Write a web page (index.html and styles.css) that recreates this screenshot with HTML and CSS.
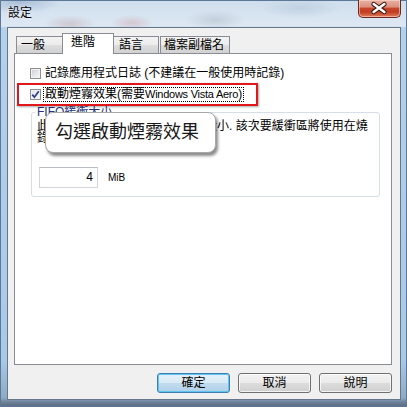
FILE: index.html
```html
<!DOCTYPE html>
<html lang="zh-Hant">
<head>
<meta charset="utf-8">
<title>設定</title>
<link rel="stylesheet" href="styles.css">
</head>
<body>
<div class="window">
  <div class="titlebar">
    <span class="title">設定</span>
    <div class="close">
      <svg width="43" height="18" viewBox="0 0 43 18">
        <path d="M16 5 L27 13 M27 5 L16 13" stroke="#3a1510" stroke-width="4.6" stroke-linecap="round"/>
        <path d="M16 5 L27 13 M27 5 L16 13" stroke="#ffffff" stroke-width="2.6" stroke-linecap="round"/>
      </svg>
    </div>
  </div>
  <div class="client">
    <div class="tabs">
      <div class="tab tab-general">一般</div>
      <div class="tab tab-advanced active">進階</div>
      <div class="tab tab-lang">語言</div>
      <div class="tab tab-ext">檔案副檔名</div>
    </div>
    <div class="panel">
      <div class="check-row">
        <span class="cb"></span>
        <span class="label">記錄應用程式日誌 (不建議在一般使用時記錄)</span>
      </div>
      <div class="check-row">
        <span class="cb checked">
          <svg width="9" height="9" viewBox="0 0 9 9"><path d="M1.3 4.6 L3.4 7.2 L7.8 1.2" fill="none" stroke="#2c3f86" stroke-width="1.7"/></svg>
        </span>
        <span class="label focus">啟動煙霧效果(需要<span class="latin">Windows Vista Aero</span>)</span>
      </div>
      <fieldset class="group">
        <legend>FIFO緩衝大小</legend>
        <p class="desc">此選項可讓您設定次要緩衝區的大小. 該次要緩衝區將使用在燒<br>錄時暫存資料.</p>
        <div class="size-row">
          <div class="input">4</div>
          <span class="unit">MiB</span>
        </div>
      </fieldset>
      <div class="highlight"></div>
      <div class="callout">勾選啟動煙霧效果</div>
    </div>
    <div class="buttons">
      <div class="btn default">確定</div>
      <div class="btn">取消</div>
      <div class="btn">說明</div>
    </div>
  </div>
</div>
</body>
</html>
```
FILE: styles.css
```css
* { box-sizing: border-box; }

html, body {
  margin: 0;
  padding: 0;
  width: 407px;
  height: 407px;
  overflow: hidden;
}

body {
  font-family: "Liberation Sans", "Noto Sans CJK TC", sans-serif;
  font-size: 12px;
  color: #000;
}

.window {
  width: 407px;
  height: 407px;
  display: flex;
  flex-direction: column;
  background:
    radial-gradient(ellipse 26px 9px at 70px 24px, rgba(190, 160, 165, 0.45), transparent),
    radial-gradient(ellipse 22px 8px at 132px 23px, rgba(200, 150, 160, 0.40), transparent),
    radial-gradient(ellipse 30px 10px at 215px 20px, rgba(170, 180, 195, 0.45), transparent),
    radial-gradient(ellipse 40px 10px at 300px 8px, rgba(170, 190, 210, 0.45), transparent),
    radial-gradient(ellipse 40px 12px at 20px 2px, rgba(120, 150, 185, 0.45), transparent),
    linear-gradient(to bottom, #cfdeed 0, #dde8f3 26px, #b4d1ec 28px, #a8c9e8 360px, #8ea9c4 398px, #6e8299 402px, #56687d 407px);
  box-shadow: inset 0 0 0 1px #5d7897;
}

.titlebar {
  height: 27px;
  flex: none;
  display: flex;
  justify-content: space-between;
  align-items: flex-start;
  padding: 0 6px 0 8px;
}

.title {
  margin-top: 7px;
  line-height: 13px;
  font-size: 12px;
  color: #000;
  text-shadow: 0 0 4px rgba(255, 255, 255, 0.9);
}

.close {
  width: 43px;
  height: 18px;
  border: 1px solid #6b2a1f;
  border-top: none;
  border-radius: 0 0 5px 5px;
  background: linear-gradient(to bottom, #e9b2a6 0, #dc8f7d 40%, #c5452c 50%, #c23d22 70%, #e07c5f 100%);
  box-shadow: inset 0 0 0 1px rgba(255, 220, 210, 0.55);
  display: flex;
}

.close svg { display: block; margin: -1px 0 0 -1px; }

.client {
  flex: 1;
  margin: 0 6px 7px 7px;
  border: 1px solid #66778c;
  background: #f0f0f0;
  display: flex;
  flex-direction: column;
  padding-top: 5px;
}

.tabs {
  height: 20px;
  flex: none;
  display: flex;
  align-items: flex-end;
  padding-left: 8px;
}

.tab {
  height: 17px;
  border: 1px solid #898c95;
  border-bottom: none;
  background: linear-gradient(to bottom, #f3f3f3 0, #ececec 50%, #dedede 50%, #d2d2d2 100%);
  padding: 2px 0 0 4px;
  line-height: 13px;
  white-space: nowrap;
}

.tab-general { width: 47px; }
.tab-advanced { width: 52px; margin-left: -1px; }
.tab-lang { width: 46px; margin-left: -1px; padding-left: 5px; }
.tab-ext { width: 70px; margin-left: 1px; padding-left: 3px; }

.tab.active {
  height: 21px;
  margin-bottom: -1px;
  background: #fff;
  position: relative;
  z-index: 1;
  padding: 2px 0 0 8px;
}

.panel {
  flex: none;
  height: 312px;
  width: 378px;
  margin-left: 6px;
  border: 1px solid #898c95;
  background: #fff;
  position: relative;
  padding: 9px 11px 0 15px;
}

.check-row {
  height: 21px;
  display: flex;
  align-items: center;
}

.cb {
  width: 11px;
  height: 11px;
  flex: none;
  border: 1px solid #8e8f8f;
  background: linear-gradient(135deg, #c9ccd1 0, #e6e7e9 55%, #f7f7f7 100%);
  box-shadow: inset 0 0 0 1px #f2f2f2;
  display: flex;
  align-items: center;
  justify-content: center;
}

.cb.checked {
  background: linear-gradient(135deg, #e2e4e8 0, #f6f6f6 100%);
}

.cb svg { display: block; }

.label {
  margin-left: 2px;
  border: 1px dotted transparent;
  padding: 0 1px;
  line-height: 13px;
  white-space: nowrap;
}

.label.focus { border-color: #000; }

.latin { font-size: 11px; letter-spacing: -0.25px; }

.group {
  margin: 1px 0 0 1px;
  width: 349px;
  border: 1px solid #d5dfe5;
  border-radius: 3px;
  padding: 2px 5px 8px 5px;
  min-width: 0;
}

.group legend {
  padding: 0 2px;
  margin-left: -2px;
  line-height: 12px;
  font-size: 12px;
  color: #1f3478;
}

.desc {
  margin: 0;
  line-height: 12px;
  white-space: nowrap;
}

.size-row {
  margin-top: 23px;
  display: flex;
  align-items: center;
}

.input {
  margin-left: 2px;
  width: 59px;
  height: 21px;
  border: 1px solid #d2d6dc;
  border-top-color: #b9bcc2;
  background: #fff;
  text-align: right;
  padding-right: 4px;
  line-height: 19px;
  font-size: 12px;
}

.unit {
  margin-left: 10px;
  font-size: 10px;
}

.highlight {
  position: absolute;
  left: 2px;
  top: 29px;
  width: 241px;
  height: 23px;
  border: 2px solid #e3161b;
  box-shadow: 1px 1px 2px rgba(0, 0, 0, 0.35);
}

.callout {
  position: absolute;
  left: 30px;
  top: 58px;
  width: 171px;
  height: 41px;
  background: #fff;
  border: 1px solid #a8a8a8;
  border-radius: 8px;
  box-shadow: 2px 3px 3px rgba(0, 0, 0, 0.45);
  font-size: 18px;
  line-height: 35px;
  padding-left: 9px;
  color: #1a1a1a;
  font-family: "Noto Sans CJK TC", sans-serif;
  white-space: nowrap;
}

.buttons {
  flex: none;
  margin-top: 8px;
  display: flex;
  justify-content: flex-end;
  gap: 8px;
  padding-right: 8px;
}

.btn {
  width: 73px;
  height: 20px;
  border: 1px solid #707070;
  border-radius: 3px;
  background: linear-gradient(to bottom, #f2f2f2 0, #ebebeb 50%, #dddddd 50%, #cfcfcf 100%);
  box-shadow: inset 0 0 0 1px rgba(255, 255, 255, 0.75);
  text-align: center;
  line-height: 18px;
  font-size: 12px;
}

.btn.default {
  border-color: #3c7fb1;
  background: linear-gradient(to bottom, #e5f1fa 0, #d7eaf7 50%, #c2dcef 50%, #b0d0e8 100%);
  box-shadow: inset 0 0 0 1px #5ec5f1;
}
```
